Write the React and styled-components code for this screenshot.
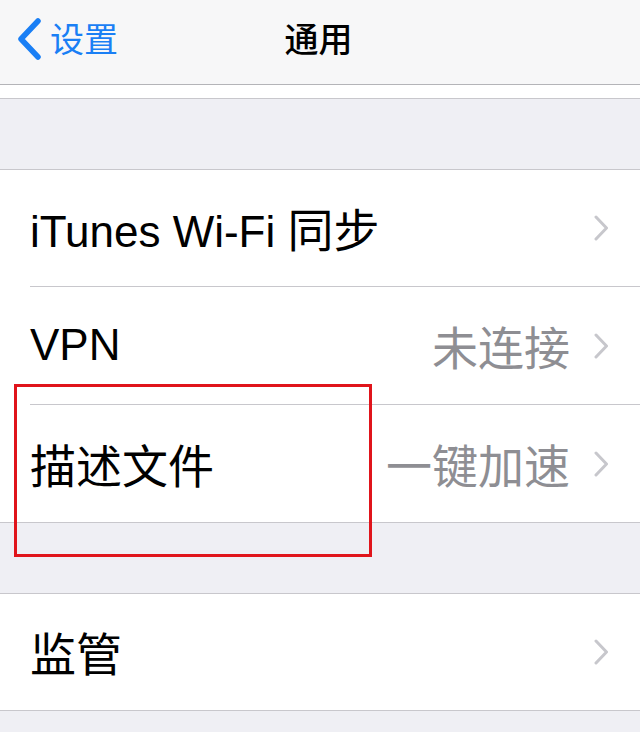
import React from "react";
import styled, { createGlobalStyle } from "styled-components";

const GlobalStyle = createGlobalStyle`
  html, body {
    margin: 0;
    padding: 0;
    background: #efeff4;
  }
  body {
    font-family: "Noto Sans CJK SC", "Noto Sans", sans-serif;
    -webkit-font-smoothing: antialiased;
  }
`;

const Page = styled.div`
  position: relative;
  width: 640px;
  height: 732px;
  overflow: hidden;
  background: #efeff4;
`;

const NavBar = styled.div`
  position: relative;
  height: 84px;
  background: #f7f7f8;
  border-bottom: 1px solid #b4b4b8;
  display: flex;
  align-items: center;
  justify-content: center;
`;

const BackButton = styled.div`
  position: absolute;
  left: 16px;
  top: -3px;
  height: 84px;
  display: flex;
  align-items: center;
  gap: 8px;
  color: #1a7ff5;
  font-size: 34px;
  span {
    margin-top: -3px;
  }
`;

const Title = styled.div`
  font-size: 34px;
  font-weight: 500;
  color: #000;
  margin-left: -3px;
  margin-top: -10px;
`;

const Strip = styled.div`
  height: 13px;
  background: #fff;
  border-bottom: 1px solid #c8c7cc;
`;

const Gap = styled.div`
  height: ${(p) => p.h}px;
`;

const Group = styled.div`
  background: #fff;
  border-top: 1px solid #c8c7cc;
  border-bottom: 1px solid #c8c7cc;
`;

const Row = styled.div`
  height: ${(p) => p.h || 116}px;
  margin-left: 30px;
  padding-right: 31px;
  display: flex;
  align-items: center;
  border-top: ${(p) => (p.first ? "none" : "1px solid #c8c7cc")};
`;

const Label = styled.div`
  flex: 1;
  font-size: 46px;
  color: #000;
  font-family: "Noto Sans CJK SC", sans-serif;
  margin-top: -2px;
`;

const Latin = styled.span`
  font-family: "Liberation Sans", sans-serif;
  font-size: 44px;
  display: ${(p) => (p.block ? "block" : "inline")};
`;

const Value = styled.div`
  font-size: 46px;
  color: #8e8e93;
  margin-right: 24px;
  margin-top: -2px;
`;

const Highlight = styled.div`
  position: absolute;
  left: 14px;
  top: 384px;
  width: 352px;
  height: 167px;
  border: 3px solid #e0141b;
`;

const Chevron = () => (
  <svg width="15" height="26" viewBox="0 0 15 26">
    <path
      d="M2 2 L12.5 13 L2 24"
      fill="none"
      stroke="#c7c7cc"
      strokeWidth="3"
      strokeLinecap="round"
      strokeLinejoin="round"
    />
  </svg>
);

const BackChevron = () => (
  <svg width="26" height="42" viewBox="0 0 26 42">
    <path
      d="M22 3 L5 21 L22 39"
      fill="none"
      stroke="#1a7ff5"
      strokeWidth="5.5"
      strokeLinecap="round"
      strokeLinejoin="round"
    />
  </svg>
);

function App() {
  return (
    <>
      <GlobalStyle />
      <Page>
        <NavBar>
          <BackButton>
            <BackChevron />
            <span>设置</span>
          </BackButton>
          <Title>通用</Title>
        </NavBar>
        <Strip />
        <Gap h={70} />
        <Group>
          <Row first>
            <Label>
              <Latin>iTunes Wi-Fi </Latin>同步
            </Label>
            <Chevron />
          </Row>
          <Row h={117}>
            <Label>
              <Latin block>VPN</Latin>
            </Label>
            <Value>未连接</Value>
            <Chevron />
          </Row>
          <Row h={117}>
            <Label>描述文件</Label>
            <Value>一键加速</Value>
            <Chevron />
          </Row>
        </Group>
        <Gap h={70} />
        <Group>
          <Row first>
            <Label>监管</Label>
            <Chevron />
          </Row>
        </Group>
        <Highlight />
      </Page>
    </>
  );
}

export default App;
